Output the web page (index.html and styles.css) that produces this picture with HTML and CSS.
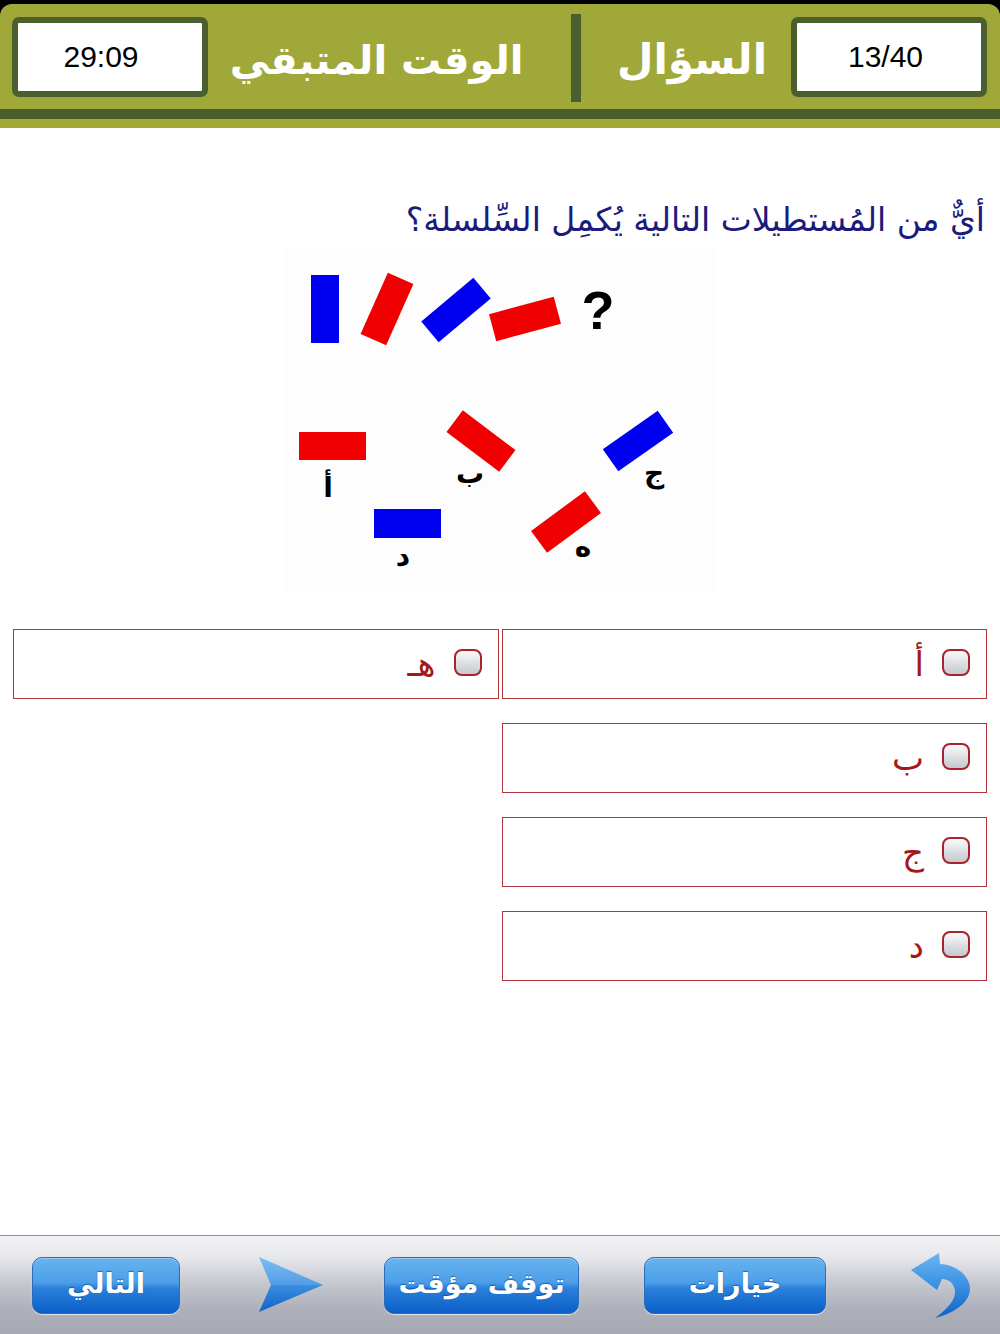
FILE: index.html
```html
<!DOCTYPE html>
<html lang="ar">
<head>
<meta charset="utf-8">
<title>اختبار</title>
<link rel="stylesheet" href="styles.css">
</head>
<body>
<div class="app">
  <header class="topbar">
    <div class="bar-main">
      <div class="counter-box time-box">29:09</div>
      <div class="label-cell time-cell"><span class="label label-time" dir="rtl">الوقت المتبقي</span></div>
      <div class="divider"></div>
      <div class="label-cell q-cell"><span class="label label-q" dir="rtl">السؤال</span></div>
      <div class="counter-box q-box">13/40</div>
    </div>
    <div class="bar-dark"></div>
    <div class="bar-light"></div>
  </header>

  <main class="content">
    <h1 class="question" dir="rtl">أيٌّ من المُستطيلات التالية يُكمِل السِّلسلة؟</h1>

    <div class="figure">
      <svg width="430" height="340" viewBox="0 0 430 340" xmlns="http://www.w3.org/2000/svg">
        <rect x="0" y="0" width="430" height="340" fill="#fdfdfd"/>
        <rect x="26" y="25" width="28" height="68" fill="#0000f0"/>
        <rect x="-14" y="-33.5" width="28" height="67" fill="#f00000" transform="translate(102 59) rotate(24)"/>
        <rect x="-34" y="-13.5" width="68" height="27" fill="#0000f0" transform="translate(171 60) rotate(-40)"/>
        <rect x="-33.5" y="-14" width="67" height="28" fill="#f00000" transform="translate(240 69) rotate(-15)"/>
        <text x="313" y="79" class="qmark" text-anchor="middle">?</text>

        <rect x="14" y="182" width="67" height="28" fill="#f00000"/>
        <rect x="-33" y="-13.5" width="66" height="27" fill="#f00000" transform="translate(196 191) rotate(37)"/>
        <rect x="-33.5" y="-13.5" width="67" height="27" fill="#0000f0" transform="translate(353 191) rotate(-35)"/>
        <rect x="89" y="259" width="67" height="29" fill="#0000f0"/>
        <rect x="-33.5" y="-13.5" width="67" height="27" fill="#f00000" transform="translate(281 272) rotate(-36.5)"/>

        <text x="43" y="247" class="fig-label" text-anchor="middle">أ</text>
        <text x="185" y="233" class="fig-label" text-anchor="middle">ب</text>
        <text x="369" y="232" class="fig-label" text-anchor="middle">ج</text>
        <text x="118" y="316" class="fig-label" text-anchor="middle">د</text>
        <text x="298" y="306" class="fig-label" text-anchor="middle">ه</text>
      </svg>
    </div>

    <div class="options" dir="rtl">
      <div class="opt-col">
        <label class="option"><span class="check"></span><span class="opt-text">أ</span></label>
        <label class="option"><span class="check"></span><span class="opt-text">ب</span></label>
        <label class="option"><span class="check"></span><span class="opt-text">ج</span></label>
        <label class="option"><span class="check"></span><span class="opt-text">د</span></label>
      </div>
      <div class="opt-col">
        <label class="option"><span class="check"></span><span class="opt-text">هـ</span></label>
      </div>
    </div>
  </main>

  <footer class="toolbar">
    <button class="tb-btn btn-next">التالي</button>
    <span class="tb-icon icon-play">
      <svg width="64" height="56" viewBox="0 0 64 56" xmlns="http://www.w3.org/2000/svg">
        <defs>
          <linearGradient id="gPlay" x1="0" y1="0" x2="0" y2="1">
            <stop offset="0" stop-color="#6ab6f2"/>
            <stop offset="0.5" stop-color="#3b90e2"/>
            <stop offset="1" stop-color="#0f62c8"/>
          </linearGradient>
        </defs>
        <path d="M0 0 L64 28 L0 55 L12 28 Z" fill="url(#gPlay)"/>
        <path d="M0 0 L64 28 L12 28 Z" fill="#ffffff" fill-opacity="0.12"/>
      </svg>
    </span>
    <button class="tb-btn btn-pause">توقف مؤقت</button>
    <button class="tb-btn btn-options">خيارات</button>
    <span class="tb-icon icon-back">
      <svg width="64" height="70" viewBox="0 0 64 70" xmlns="http://www.w3.org/2000/svg">
        <defs>
          <linearGradient id="gBack" x1="0" y1="0" x2="0" y2="1">
            <stop offset="0" stop-color="#6ab6f2"/>
            <stop offset="0.5" stop-color="#3b90e2"/>
            <stop offset="1" stop-color="#0f62c8"/>
          </linearGradient>
        </defs>
        <path d="M3 19 L31 2 L32 13 C50 14 62 26 62 38 C62 50 48 62 27 67 C42 56 50 46 46 36 C44 30 38 28 34 28 L29 39 Z" fill="url(#gBack)"/>
      </svg>
    </span>
  </footer>
</div>
</body>
</html>
```

FILE: styles.css
```css
html, body {
  margin: 0;
  padding: 0;
  background: #ffffff;
}

.app {
  width: 1000px;
  height: 1334px;
  display: flex;
  flex-direction: column;
  overflow: hidden;
  font-family: "DejaVu Sans", "Liberation Sans", sans-serif;
}

/* ---------- top bar ---------- */
.topbar {
  background: #000000;
  padding-top: 4px;
  flex: none;
}

.bar-main {
  height: 105px;
  background: #a1a83a;
  border-radius: 12px 12px 0 0;
  display: flex;
  align-items: center;
  padding: 0 13px 0 12px;
}

.counter-box {
  width: 196px;
  height: 80px;
  box-sizing: border-box;
  border: 6px solid #4b5e2e;
  border-radius: 7px;
  background: #ffffff;
  display: flex;
  align-items: center;
  justify-content: center;
  font-family: "Liberation Sans", Arial, sans-serif;
  font-size: 30px;
  color: #000000;
  flex: none;
}

.time-box { padding-right: 18px; }
.q-box { padding-right: 7px; }

.label-cell {
  height: 88px;
  display: flex;
  align-items: center;
  justify-content: center;
  box-sizing: border-box;
}

.time-cell {
  width: 363px;
  padding-right: 26px;
}

.q-cell {
  flex: 1;
  padding-left: 12px;
}

.label {
  font-family: "DejaVu Sans", sans-serif;
  font-weight: bold;
  color: #ffffff;
  line-height: 1;
  padding-top: 6px;
}

.label-time { font-size: 40px; }
.label-q { font-size: 42px; }

.divider {
  width: 10px;
  height: 88px;
  background: #4b5e2e;
  flex: none;
  margin-top: 3px;
}

.bar-dark {
  height: 10px;
  background: #4a5d2d;
}

.bar-light {
  height: 9px;
  background: #a4aa36;
}

/* ---------- content ---------- */
.content {
  flex: 1;
  padding: 0 13px;
}

.question {
  margin: 62px 2px 0 0;
  font-family: "DejaVu Sans", sans-serif;
  font-weight: normal;
  font-size: 33px;
  line-height: 60px;
  height: 60px;
  color: #1b1b7d;
  text-align: right;
}

.figure {
  display: flex;
  justify-content: center;
  height: 340px;
}

.figure svg {
  display: block;
}

.qmark {
  font-family: "Liberation Sans", Arial, sans-serif;
  font-weight: bold;
  font-size: 54px;
  fill: #000000;
}

.fig-label {
  font-family: "DejaVu Sans", sans-serif;
  font-weight: bold;
  font-size: 28px;
  fill: #000000;
}

.options {
  margin-top: 39px;
  display: flex;
  gap: 3px;
}

.opt-col {
  width: 486px;
  display: flex;
  flex-direction: column;
  gap: 24px;
}

.option {
  height: 70px;
  box-sizing: border-box;
  border: 1.5px solid #b3363a;
  display: flex;
  align-items: center;
  padding-right: 16px;
  gap: 18px;
}

.check {
  width: 28px;
  height: 27px;
  box-sizing: border-box;
  border: 2.5px solid #a8232b;
  border-radius: 8px;
  background: linear-gradient(#fafafa, #d9dcdf 60%, #c5c9ce);
  margin-top: -4px;
  flex: none;
}

.opt-text {
  font-family: "DejaVu Sans", sans-serif;
  font-size: 34px;
  color: #a4171a;
  line-height: 1;
}

/* ---------- toolbar ---------- */
.toolbar {
  flex: none;
  height: 98px;
  border-top: 1px solid #8e8e93;
  background: linear-gradient(#f3f3f5 0%, #e6e7eb 22%, #c4c6ce 50%, #adb0ba 75%, #a7aab5 100%);
  display: flex;
  align-items: center;
  padding-left: 32px;
}

.tb-btn {
  height: 57px;
  border: 1px solid #2a6cb8;
  border-radius: 10px;
  background: linear-gradient(#67b3f0 0%, #4b9ee7 45%, #2a80da 55%, #0b5fc9 100%);
  box-shadow: 0 1px 1px rgba(255, 255, 255, 0.7), inset 0 1px 0 rgba(255, 255, 255, 0.35);
  color: #ffffff;
  font-family: "DejaVu Sans", sans-serif;
  font-weight: bold;
  font-size: 27px;
  text-shadow: 0 -1px 1px rgba(0, 40, 110, 0.5);
  padding: 0 0 4px 0;
  margin: 0;
  display: flex;
  align-items: center;
  justify-content: center;
  flex: none;
  box-sizing: border-box;
}

.btn-next { width: 148px; }
.btn-pause { width: 195px; margin-left: 61px; }
.btn-options { width: 182px; margin-left: 65px; }

.tb-icon {
  display: flex;
  flex: none;
}

.icon-play { margin-left: 79px; }
.icon-back { margin-left: 82px; margin-top: 2px; }
```
